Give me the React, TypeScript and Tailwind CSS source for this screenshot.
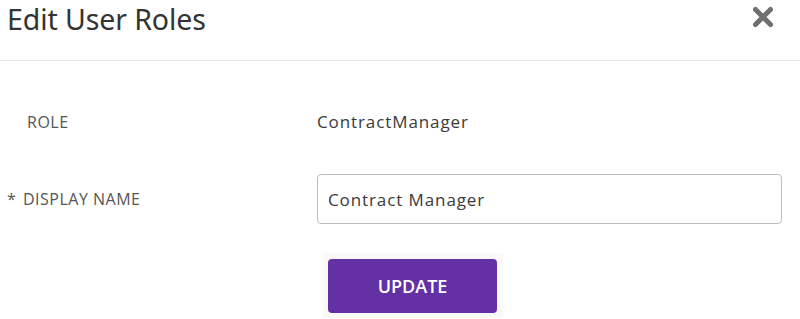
import React from "react";

export default function App() {
  return (
    <div className="w-[800px] h-[319px] bg-white overflow-hidden" style={{ fontFamily: '"Open Sans", sans-serif' }}>
      <div className="h-[61px] flex items-start justify-between border-b border-[#e6e6e6] pl-[7px] pr-[26px]">
        <h1 className="text-[28.5px] leading-none text-[#333] mt-[5px] tracking-[-0.1px]" style={{ fontFamily: '"Noto Sans", sans-serif' }}>Edit User Roles</h1>
        <svg className="mt-[6px]" width="22" height="22" viewBox="0 0 22 22">
          <path d="M3.5 3.5 L18.5 18.5 M18.5 3.5 L3.5 18.5" stroke="#6f6f6f" strokeWidth="5" strokeLinecap="round" />
        </svg>
      </div>
      <div className="grid grid-cols-[317px_465px] items-center">
        <div className="flex h-[62px] mt-[30px] items-center pl-[27px] text-[16px] tracking-[0.5px] text-[#555]">ROLE</div>
        <div className="flex h-[62px] mt-[30px] items-center text-[17px] tracking-[0.9px] text-[#3a3a3a]">ContractManager</div>
        <div className="flex items-center pl-[7px] mt-[21px] text-[16px] tracking-[0.5px] text-[#555]">
          <span className="w-[16px]">*</span>
          <span>DISPLAY NAME</span>
        </div>
        <input
          readOnly
          value="Contract Manager"
          className="h-[50px] mt-[21px] w-[465px] border border-[#bdbdbd] rounded-[4px] px-[10px] text-[17px] tracking-[0.9px] text-[#3a3a3a] outline-none"
          style={{ fontFamily: '"Open Sans", sans-serif' }}
        />
      </div>
      <div className="pl-[323px] mt-[29px]">
        <div className="w-[180px] h-[65px] bg-[#f9f9f9] pl-[5px] pt-[6px]">
          <button className="w-[169px] h-[54px] bg-[#6331a3] rounded-[4px] text-white text-[18px] font-semibold">UPDATE</button>
        </div>
      </div>
    </div>
  );
}
